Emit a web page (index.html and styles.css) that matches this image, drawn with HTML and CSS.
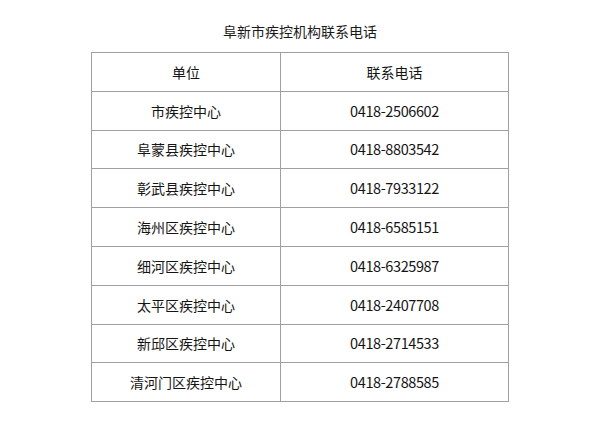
FILE: index.html
```html
<!DOCTYPE html>
<html lang="zh-CN">
<head>
<meta charset="utf-8">
<title>阜新市疾控机构联系电话</title>
<link rel="stylesheet" href="styles.css">
</head>
<body>
<div class="page">
  <h1 class="title">阜新市疾控机构联系电话</h1>
  <table class="contacts">
    <thead>
      <tr><th class="unit">单位</th><th class="phone">联系电话</th></tr>
    </thead>
    <tbody>
      <tr><td>市疾控中心</td><td class="num">0418-2506602</td></tr>
      <tr><td>阜蒙县疾控中心</td><td class="num">0418-8803542</td></tr>
      <tr><td>彰武县疾控中心</td><td class="num">0418-7933122</td></tr>
      <tr><td>海州区疾控中心</td><td class="num">0418-6585151</td></tr>
      <tr><td>细河区疾控中心</td><td class="num">0418-6325987</td></tr>
      <tr><td>太平区疾控中心</td><td class="num">0418-2407708</td></tr>
      <tr><td>新邱区疾控中心</td><td class="num">0418-2714533</td></tr>
      <tr><td>清河门区疾控中心</td><td class="num">0418-2788585</td></tr>
    </tbody>
  </table>
</div>
</body>
</html>
```
FILE: styles.css
```css
html, body {
  margin: 0;
  padding: 0;
  background: #ffffff;
}
body {
  font-family: "Noto Sans CJK SC", "Noto Sans", sans-serif;
  color: #141414;
}
.page {
  width: 600px;
  height: 433px;
  display: flex;
  flex-direction: column;
  align-items: center;
}
.title {
  margin: 20px 0 0 0;
  font-size: 14px;
  font-weight: 400;
  line-height: 22px;
  color: #1a1a1a;
  height: 32px;
}
.contacts {
  border-collapse: collapse;
  width: 418px;
  table-layout: fixed;
}
.contacts th,
.contacts td {
  border: 1.5px solid #a0a0a0;
  height: 37.8px;
  padding: 0;
  text-align: center;
  font-size: 14px;
  font-weight: 400;
  line-height: 20px;
}
.contacts th.unit {
  width: 188px;
}
.contacts .num {
  font-size: 14.5px;
  letter-spacing: -0.4px;
}
```
